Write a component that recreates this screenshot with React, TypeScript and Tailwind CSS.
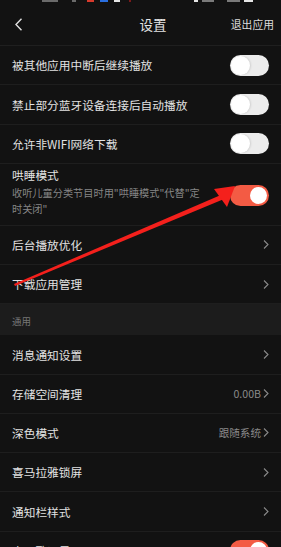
import React from 'react';

type Row =
  | { kind: 'toggle'; label: string; on?: boolean; sub?: string }
  | { kind: 'link'; label: string; value?: string };

const topRows: Row[] = [
  { kind: 'toggle', label: '被其他应用中断后继续播放' },
  { kind: 'toggle', label: '禁止部分蓝牙设备连接后自动播放' },
  { kind: 'toggle', label: '允许非WIFI网络下载' },
  { kind: 'toggle', label: '哄睡模式', on: true, sub: '收听儿童分类节目时用"哄睡模式"代替"定时关闭"' },
  { kind: 'link', label: '后台播放优化' },
  { kind: 'link', label: '下载应用管理' },
];

const generalRows: Row[] = [
  { kind: 'link', label: '消息通知设置' },
  { kind: 'link', label: '存储空间清理', value: '0.00B' },
  { kind: 'link', label: '深色模式', value: '跟随系统 ' },
  { kind: 'link', label: '喜马拉雅锁屏' },
  { kind: 'link', label: '通知栏样式' },
  { kind: 'toggle', label: '桌面歌词显示', on: true },
];

const Chevron = () => (
  <svg width="6" height="9" viewBox="0 0 6 9" className="shrink-0">
    <polyline points="1,0.5 5,4.5 1,8.5" fill="none" stroke="#8a8a8a" strokeWidth="1.1" />
  </svg>
);

const Toggle = ({ on }: { on?: boolean }) =>
  on ? (
    <div className="w-[39px] h-[21px] rounded-full bg-[#f35b44] flex items-center justify-end pr-[2px] shrink-0 self-center">
      <div className="w-[17px] h-[17px] rounded-full bg-white" />
    </div>
  ) : (
    <div className="w-[39px] h-[21px] rounded-full bg-[#ececec] flex items-center pl-[1px] shrink-0 self-center">
      <div className="w-[19px] h-[19px] rounded-full bg-white shadow-[1px_0_2px_rgba(0,0,0,0.12)]" />
    </div>
  );

const SettingRow = ({ row }: { row: Row }) => {
  if (row.kind === 'toggle' && row.sub) {
    return (
      <div className="flex items-start justify-between pl-3 pr-3 pt-[3px] h-[62px] border-b border-[#1e1e1e]">
        <div className="w-[192px]">
          <p className="text-[11.7px] leading-[16px] text-[#e2e2e2]">{row.label}</p>
          <p className="mt-[2px] text-[10.2px] leading-[16px] text-[#858585]">{row.sub}</p>
        </div>
        <Toggle on={row.on} />
      </div>
    );
  }
  return (
    <div className="flex items-center justify-between pl-3 pr-3 h-[39.25px] border-b border-[#1e1e1e]">
      <span className="text-[11.7px] text-[#e2e2e2] whitespace-nowrap">{row.label}</span>
      {row.kind === 'toggle' ? (
        <Toggle on={row.on} />
      ) : (
        <div className="flex items-center gap-[2px] text-[10.6px] text-[#8a8a8a]">
          {row.value && <span>{row.value}</span>}
          <Chevron />
        </div>
      )}
    </div>
  );
};

export default function App() {
  return (
    <div className="relative w-[281px] h-[547px] overflow-hidden bg-[#121212] font-['Noto_Sans_CJK_SC','Noto_Sans',sans-serif]">
      {/* clipped status bar */}
      <div className="flex h-[3px] items-start">
        <div className="ml-[42px] w-[16px] h-[2px] bg-[#6a6a6a]" />
        <div className="ml-[14px] w-[4px] h-[2px] bg-[#6a6a6a]" />
        <div className="ml-[11px] w-[7px] h-[2px] bg-[#d83a2c]" />
        <div className="ml-[6px] w-[8px] h-[2px] bg-[#2a6fe0]" />
        <div className="ml-[6px] w-[6px] h-[2px] bg-[#e6e6e6]" />
        <div className="ml-[9px] w-[2px] h-[2px] bg-[#7a1a1a]" />
        <div className="ml-[63px] w-[4px] h-[2px] bg-[#e6e6e6]" />
        <div className="ml-[4px] w-[12px] h-[2px] bg-[#7a7a7a]" />
        <div className="ml-[13px] w-[13px] h-[2px] bg-[#7a7a7a]" />
        <div className="ml-[4px] w-[9px] h-[2px] bg-[#e6e6e6]" />
      </div>

      {/* header */}
      <div className="flex items-center justify-between h-[43px] pl-[15px] pr-[7px] border-b border-[#1f1f1f]">
        <svg width="8" height="13" viewBox="0 0 8 13">
          <polyline points="6.5,0.8 1,6.5 6.5,12.2" fill="none" stroke="#e0e0e0" strokeWidth="1.4" />
        </svg>
        <span className="ml-[52px] text-[13.5px] text-[#e4e4e4]">设置</span>
        <span className="text-[10.8px] text-[#dcdcdc]">退出应用</span>
      </div>

      {topRows.map((r, i) => (
        <SettingRow key={i} row={r} />
      ))}

      <div className="h-[31px] bg-[#1c1c1c] flex items-center pl-3 pt-[2px]">
        <span className="text-[9.5px] text-[#767676]">通用</span>
      </div>

      {generalRows.map((r, i) => (
        <SettingRow key={i} row={r} />
      ))}

      {/* annotation arrow */}
      <svg className="absolute inset-0 pointer-events-none" width="281" height="547" viewBox="0 0 281 547">
        <polygon points="14,284 222,194.5 224,199 15,286" fill="#f4201c" />
        <polygon points="235,186 214,189 227,207" fill="#f4201c" />
      </svg>
    </div>
  );
}
